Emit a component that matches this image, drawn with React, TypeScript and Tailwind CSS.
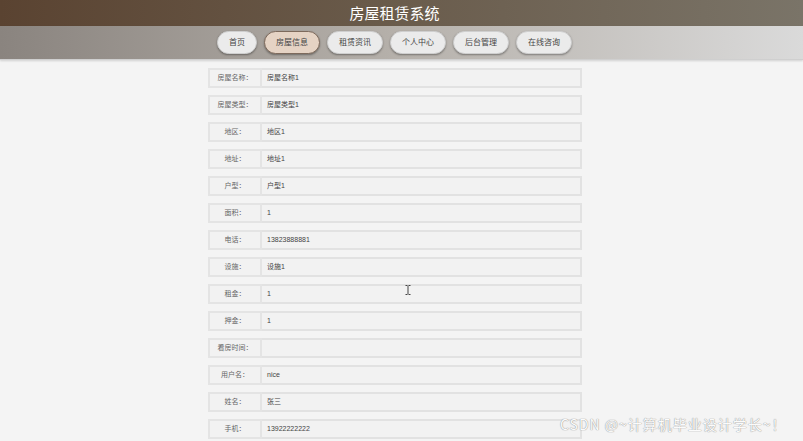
const navItems = ["首页", "房屋信息", "租赁资讯", "个人中心", "后台管理", "在线咨询"];

const fields: { label: string; value: string }[] = [
  { label: "房屋名称：", value: "房屋名称1" },
  { label: "房屋类型：", value: "房屋类型1" },
  { label: "地区：", value: "地区1" },
  { label: "地址：", value: "地址1" },
  { label: "户型：", value: "户型1" },
  { label: "面积：", value: "1" },
  { label: "电话：", value: "13823888881" },
  { label: "设施：", value: "设施1" },
  { label: "租金：", value: "1" },
  { label: "押金：", value: "1" },
  { label: "看房时间：", value: "" },
  { label: "用户名：", value: "nice" },
  { label: "姓名：", value: "张三" },
  { label: "手机：", value: "13922222222" },
];

const App = () => {
  return (
    <div
      className="relative h-[441px] w-[803px] overflow-hidden bg-[#f4f4f4]"
      style={{ fontFamily: '"Liberation Sans", "Noto Sans CJK SC", sans-serif' }}
    >
      <div className="flex h-[26px] items-center justify-center bg-gradient-to-r from-[#5a4331] via-[#6a5c4c] to-[#7a7468] pr-[14px]">
        <h1 className="text-[15px] font-normal leading-none text-white">
          房屋租赁系统
        </h1>
      </div>
      <div className="flex h-[34px] items-center justify-center gap-[7px] border-b border-[#cfcfcf] bg-gradient-to-r from-[#8a847f] via-[#b6b1ab] to-[#dadada] pr-[14px] shadow-[0_1px_2px_rgba(0,0,0,0.15)]">
        {navItems.map((item, i) => (
          <div
            key={item}
            className={`flex h-[23px] items-center justify-center rounded-full text-[8px] text-[#444] shadow-[0_1px_2px_rgba(0,0,0,0.35)] ${
              i === 0 ? "w-[40px]" : "w-[56px]"
            } ${
              i === 1
                ? "border border-[#7d6a5c] bg-[#e5d3c4]"
                : "border border-[#cfcfcf] bg-[#ebebeb]"
            }`}
          >
            {item}
          </div>
        ))}
      </div>

      <div className="ml-[208px] mt-[8px] flex w-[374px] flex-col gap-[7px]">
        {fields.map((f) => (
          <div key={f.label} className="flex h-[20px]">
            <div className="flex w-[54px] items-center justify-center border-2 border-[#e4e4e4] bg-[#f2f2f2] text-[7px] text-[#666]">
              {f.label}
            </div>
            <div className="flex flex-1 items-center border-2 border-l-0 border-[#e2e2e2] bg-[#f2f2f2] pl-[5px] text-[7px] text-[#444]">
              {f.value}
            </div>
          </div>
        ))}
      </div>

      <svg className="absolute left-[405px] top-[285px]" width="6" height="10" viewBox="0 0 6 10">
        <path d="M0.5 0.5h2M3.5 0.5h2M3 1v8M0.5 9.5h2M3.5 9.5h2" stroke="#444" strokeWidth="1" fill="none" />
      </svg>

      <div
        className="absolute left-[560px] top-[414px] text-[14px] tracking-[1px] text-[#fbfbfb]"
        style={{
          fontFamily: '"Noto Sans CJK SC", sans-serif',
          textShadow: "0 0 1px #999, 0 0 1px #999",
        }}
      >
        CSDN @~计算机毕业设计学长~！
      </div>
    </div>
  );
};

export default App;
